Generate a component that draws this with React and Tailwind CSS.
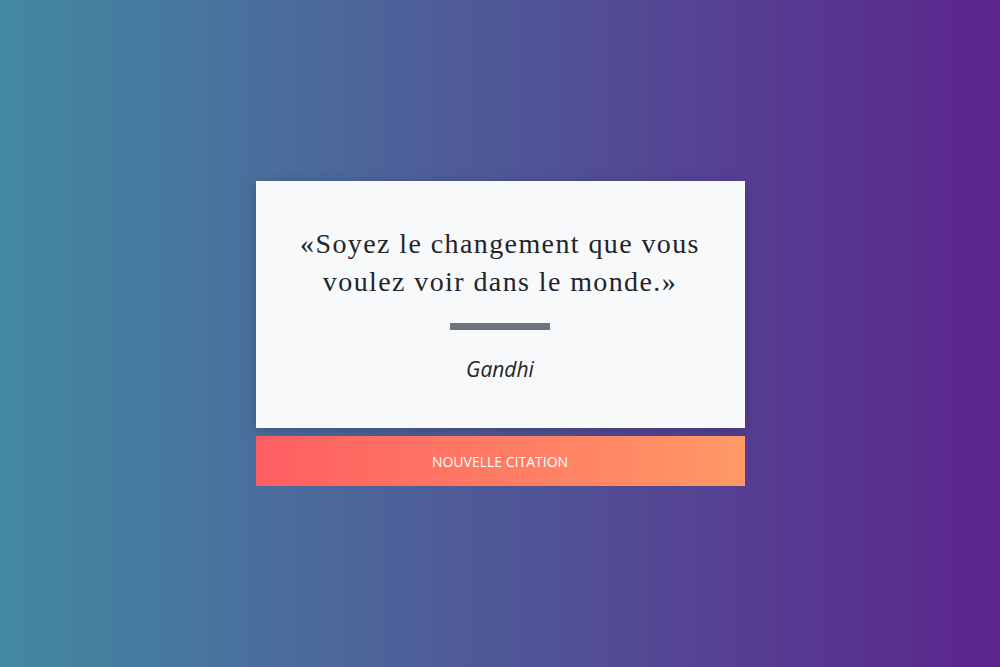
export default function App() {
  return (
    <div className="flex h-[667px] w-full items-center justify-center bg-[linear-gradient(to_right,#4389a2,#5c258d)]">
      <div className="flex w-[489px] flex-col gap-2">
        <div className="flex h-[247px] flex-col items-center bg-[#f8f9fa] px-6 pt-[44px] shadow-[0_3px_12px_rgba(0,0,0,0.22)]">
          <p className="text-center font-['Liberation_Serif',serif] text-[28px] leading-[38px] tracking-[1.4px] text-[#212529]">
            «Soyez le changement que vous voulez voir dans le monde.»
          </p>
          <div className="mt-[22px] h-[7px] w-[100px] bg-[#6c757d]" />
          <p className="mt-[24px] font-['Open_Sans',sans-serif] text-[21px] italic text-[#212529]">
            Gandhi
          </p>
        </div>
        <button className="h-[50px] w-full bg-[linear-gradient(to_right,#ff5e62,#ff9966)] font-['Open_Sans',sans-serif] text-[14px] text-white uppercase">
          Nouvelle citation
        </button>
      </div>
    </div>
  );
}
